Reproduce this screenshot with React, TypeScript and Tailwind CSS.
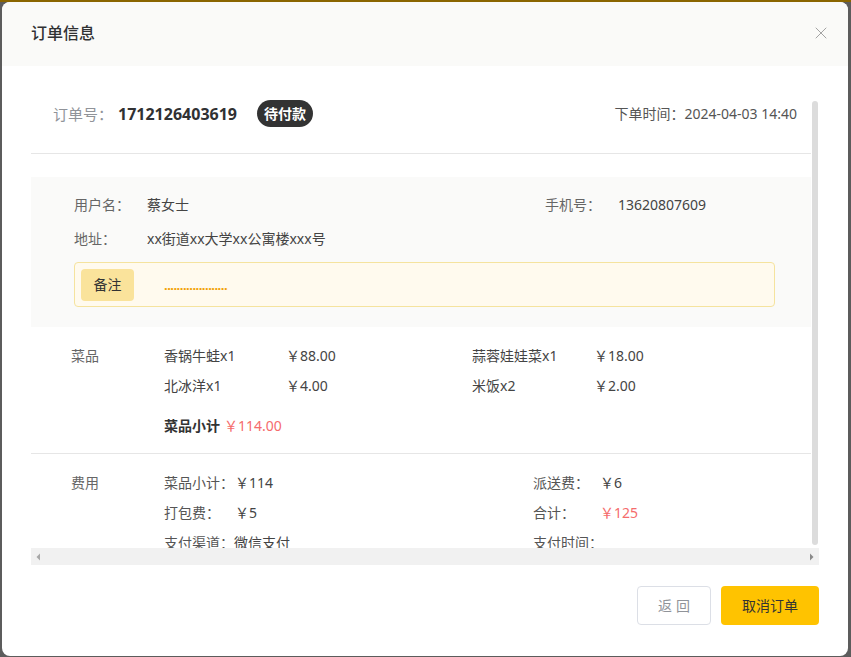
import { X } from 'lucide-react';

const font = { fontFamily: '"Noto Sans", "Noto Sans CJK SC", sans-serif' };

const dishes = [
  { name: '香锅牛蛙x1', price: '￥88.00' },
  { name: '蒜蓉娃娃菜x1', price: '￥18.00' },
  { name: '北冰洋x1', price: '￥4.00' },
  { name: '米饭x2', price: '￥2.00' },
];

function Field({ label, value, labelW, red }: { label: string; value: string; labelW: string; red?: boolean }) {
  return (
    <div className="flex items-center h-5 whitespace-nowrap">
      <span className={`${labelW} shrink-0 text-[#555]`}>{label}</span>
      <span className={red ? 'text-[#f56c6c]' : 'text-[#444]'}>{value}</span>
    </div>
  );
}

export default function App() {
  return (
    <div className="h-[657px] bg-[#5c5c5c] border-t-2 border-[#8a6500] overflow-hidden text-sm leading-5" style={font}>
      <div className="ml-[2px] w-[846px] h-[654px] bg-white rounded-lg flex flex-col overflow-hidden">
        {/* header */}
        <div className="h-16 shrink-0 bg-[#fafaf8] flex items-center justify-between pl-[29px] pr-[17px] pb-[2px]">
          <span className="text-base font-medium text-[#303133]">订单信息</span>
          <X size={20} strokeWidth={1.1} className="text-[#9a9a9a]" />
        </div>

        {/* body */}
        <div className="px-[29px] pt-[34px]">
          <div className="flex h-[448px]">
            <div className="w-[780px] overflow-hidden">
              {/* order number row */}
              <div className="h-[27px] flex items-center justify-between pl-[22px] pr-[14px]">
                <div className="flex items-center">
                  <span className="text-[15px] text-[#909399]">订单号：</span>
                  <span className="ml-[5px] text-base font-bold text-[#303133]">1712126403619</span>
                  <span className="ml-[20px] h-[27px] px-[7px] rounded-full bg-[#333] text-white font-bold flex items-center">待付款</span>
                </div>
                <span className="text-[#555]">下单时间：2024-04-03 14:40</span>
              </div>
              <div className="mt-[26px] h-px bg-[#e6e6e6]" />

              {/* user box */}
              <div className="mt-[23px] bg-[#fafaf9] pt-[18px] pb-[20px] pl-[43px] pr-[36px]">
                <div className="flex items-center h-5">
                  <div className="w-[471px] flex">
                    <span className="w-[73px] text-[#666]">用户名：</span>
                    <span className="text-[#444]">蔡女士</span>
                  </div>
                  <span className="w-[73px] text-[#666]">手机号：</span>
                  <span className="text-[#444]">13620807609</span>
                </div>
                <div className="flex items-center h-5 mt-[14px]">
                  <span className="w-[73px] text-[#666]">地址：</span>
                  <span className="text-[#444]">xx街道xx大学xx公寓楼xxx号</span>
                </div>
                <div className="mt-[13px] h-[45px] border border-[#f5e39e] bg-[#fffaee] rounded flex items-center pl-[6px]">
                  <span className="w-[53px] h-[32px] rounded bg-[#fae39b] text-[#333] flex items-center justify-center">备注</span>
                  <span className="ml-[30px] text-[13px] font-bold text-[#f2a000] tracking-[-0.5px]">....................</span>
                </div>
              </div>

              {/* dishes */}
              <div className="flex pl-[40px] pt-[19px] pb-[17px]">
                <span className="w-[93px] text-[#666]">菜品</span>
                <div>
                  <div className="grid grid-cols-[308px_308px] gap-y-[10px]">
                    {dishes.map((d) => (
                      <div key={d.name} className="flex h-5 items-center">
                        <span className="w-[122px] text-[#444]">{d.name}</span>
                        <span className="text-[#444]">{d.price}</span>
                      </div>
                    ))}
                  </div>
                  <div className="mt-[20px] flex items-center h-5">
                    <span className="font-bold text-[#333]">菜品小计</span>
                    <span className="ml-[4px] text-[#f56c6c]">￥114.00</span>
                  </div>
                </div>
              </div>
              <div className="h-px bg-[#e6e6e6]" />

              {/* fees */}
              <div className="flex pl-[40px] pt-[19px]">
                <span className="w-[93px] text-[#666]">费用</span>
                <div className="grid grid-cols-[369px_200px] gap-y-[10px]">
                  <Field label="菜品小计：" value="￥114" labelW="w-[71px]" />
                  <Field label="派送费：" value="￥6" labelW="w-[67px]" />
                  <Field label="打包费：" value="￥5" labelW="w-[71px]" />
                  <Field label="合计：" value="￥125" labelW="w-[67px]" red />
                  <Field label="支付渠道：" value="微信支付" labelW="w-[70px]" />
                  <Field label="支付时间：" value="" labelW="w-[70px]" />
                </div>
              </div>
            </div>
            {/* vertical scrollbar */}
            <div className="w-[8px] pl-[1px] pt-[1px] pb-[3px]">
              <div className="w-[6px] h-full rounded-full bg-[#dcdcdc]" />
            </div>
          </div>
          {/* horizontal scrollbar */}
          <div className="h-[17px] bg-[#f1f1f1] flex items-center justify-between px-[5px]">
            <svg width="5" height="8" viewBox="0 0 5 8"><path d="M4 0.5 L0.5 4 L4 7.5 Z" fill="#a8a8a8" /></svg>
            <svg width="5" height="8" viewBox="0 0 5 8"><path d="M1 0.5 L4.5 4 L1 7.5 Z" fill="#8a8a8a" /></svg>
          </div>
        </div>

        {/* footer */}
        <div className="flex justify-end gap-[10px] px-[29px] mt-[21px]">
          <button className="w-[74px] h-[39px] rounded border border-[#dcdfe6] text-[#909399] tracking-[4px] pl-[4px]">返回</button>
          <button className="w-[98px] h-[39px] rounded bg-[#ffc300] text-[#333]">取消订单</button>
        </div>
      </div>
    </div>
  );
}
